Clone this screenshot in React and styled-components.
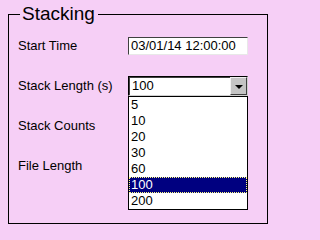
import * as React from 'react'
import styled, { createGlobalStyle } from 'styled-components'

const GlobalStyle = createGlobalStyle`
	html, body {
		margin: 0;
		padding: 0;
		background: #f6cff6;
	}
	body {
		width: 274px;
		height: 229px;
		overflow: hidden;
		font-family: "Liberation Sans", Arial, sans-serif;
		color: #000;
	}
`

const Group = styled.fieldset`
	box-sizing: border-box;
	margin: 3px 0 0 8px;
	padding: 11px 0 0 9px;
	width: 260px;
	height: 221px;
	border: 1px solid #000;
	position: relative;
`

const Legend = styled.legend`
	margin-left: 2px;
	padding: 0 3px 0 2px;
	font-size: 19px;
	line-height: 22px;
`

const Row = styled.div`
	display: flex;
	align-items: center;
	height: 20px;
	margin-bottom: 20px;
	position: relative;
`

const Label = styled.span`
	width: 110px;
	font-size: 13px;
	line-height: 16px;
	white-space: nowrap;
`

const TextBox = styled.div`
	box-sizing: border-box;
	width: 120px;
	height: 18px;
	padding: 0 0 0 2px;
	background: #fff;
	border-style: solid;
	border-width: 1px;
	border-color: #404040 #e8e8e8 #e8e8e8 #404040;
	font-size: 13px;
	line-height: 16px;
	white-space: nowrap;
	overflow: hidden;
`

const Combo = styled.div`
	box-sizing: border-box;
	width: 120px;
	height: 20px;
	display: flex;
	align-items: stretch;
	background: #fff;
	border-style: solid;
	border-width: 1px;
	border-color: #000 #d0d0d0 #d0d0d0 #000;
	box-shadow: inset 1px 1px 0 #404040;
	position: relative;
`

const ComboValue = styled.span`
	flex: 1;
	padding-left: 3px;
	font-size: 13px;
	line-height: 18px;
`

const ArrowButton = styled.span`
	box-sizing: border-box;
	width: 17px;
	display: flex;
	align-items: center;
	justify-content: center;
	background: #c4c4c4;
	border-style: solid;
	border-width: 1px;
	border-color: #f0f0f0 #404040 #404040 #f0f0f0;
`

const Arrow = styled.span`
	width: 0;
	height: 0;
	border-left: 4px solid transparent;
	border-right: 4px solid transparent;
	border-top: 4px solid #000;
	margin-top: 2px;
`

const List = styled.ul`
	position: absolute;
	left: -1px;
	top: 19px;
	box-sizing: border-box;
	width: 120px;
	margin: 0;
	padding: 0;
	list-style: none;
	background: #fff;
	border: 1px solid #000;
	z-index: 2;
`

const Option = styled.li`
	box-sizing: border-box;
	height: 16px;
	padding-left: 2px;
	font-size: 13px;
	line-height: 16px;
	background: ${(p) => (p.selected ? '#000080' : '#fff')};
	color: ${(p) => (p.selected ? '#fff' : '#000')};
	outline: ${(p) => (p.selected ? '1px dotted #ffff80' : 'none')};
	outline-offset: -1px;
`

const lengths = ['5', '10', '20', '30', '60', '100', '200']

const App = () => {
	const value = '100'
	return (
		<React.Fragment>
			<GlobalStyle />
			<Group>
				<Legend>Stacking</Legend>
				<Row>
					<Label>Start Time</Label>
					<TextBox>03/01/14 12:00:00</TextBox>
				</Row>
				<Row>
					<Label>Stack Length (s)</Label>
					<Combo>
						<ComboValue>{value}</ComboValue>
						<ArrowButton>
							<Arrow />
						</ArrowButton>
						<List>
							{lengths.map((l) => (
								<Option key={l} selected={l === value}>
									{l}
								</Option>
							))}
						</List>
					</Combo>
				</Row>
				<Row>
					<Label>Stack Counts</Label>
				</Row>
				<Row>
					<Label>File Length</Label>
				</Row>
			</Group>
		</React.Fragment>
	)
}

export default App
